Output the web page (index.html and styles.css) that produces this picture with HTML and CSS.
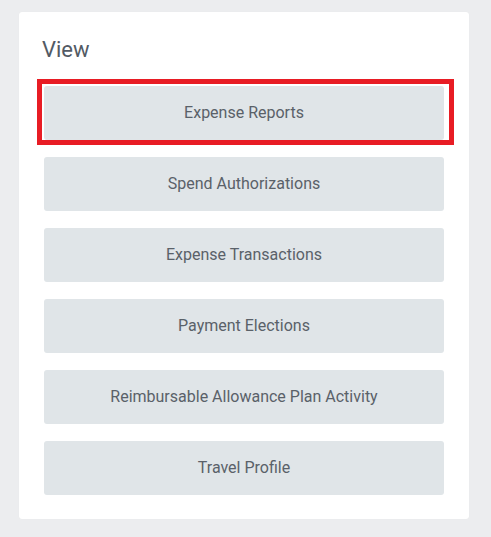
FILE: index.html
```html
<!DOCTYPE html>
<html lang="en">
<head>
<meta charset="utf-8">
<title>View</title>
<link rel="stylesheet" href="styles.css">
</head>
<body>
<section class="card">
  <h2 class="card-title">View</h2>
  <div class="actions">
    <button class="action">Expense Reports</button>
    <button class="action">Spend Authorizations</button>
    <button class="action">Expense Transactions</button>
    <button class="action">Payment Elections</button>
    <button class="action">Reimbursable Allowance Plan Activity</button>
    <button class="action">Travel Profile</button>
  </div>
  <div class="highlight"></div>
</section>
</body>
</html>
```
FILE: styles.css
```css
html, body {
  margin: 0;
  padding: 0;
}
body {
  background: #ecedef;
  font-family: Roboto, "Liberation Sans", sans-serif;
  height: 537px;
  padding-top: 12px;
  box-sizing: border-box;
}
.card {
  position: relative;
  margin-left: 19px;
  width: 450px;
  box-sizing: border-box;
  background: #ffffff;
  border-radius: 3px;
  padding: 26px 25px 24px;
  box-shadow: 0 0 1px rgba(0, 0, 0, 0.06);
}
.card-title {
  margin: 0 0 24px -2px;
  font-size: 22px;
  line-height: 24px;
  font-weight: 400;
  color: #525a64;
}
.actions {
  display: flex;
  flex-direction: column;
  gap: 17px;
}
.action {
  height: 54px;
  border: none;
  border-radius: 3px;
  background: #e0e5e8;
  color: #5a6169;
  font-family: Roboto, "Liberation Sans", sans-serif;
  font-size: 16px;
  padding: 0 0 1px;
  text-align: center;
  cursor: pointer;
}
.highlight {
  position: absolute;
  left: 18px;
  top: 67px;
  width: 417px;
  height: 66px;
  box-sizing: border-box;
  border: 5px solid #e81c24;
  pointer-events: none;
}
```
